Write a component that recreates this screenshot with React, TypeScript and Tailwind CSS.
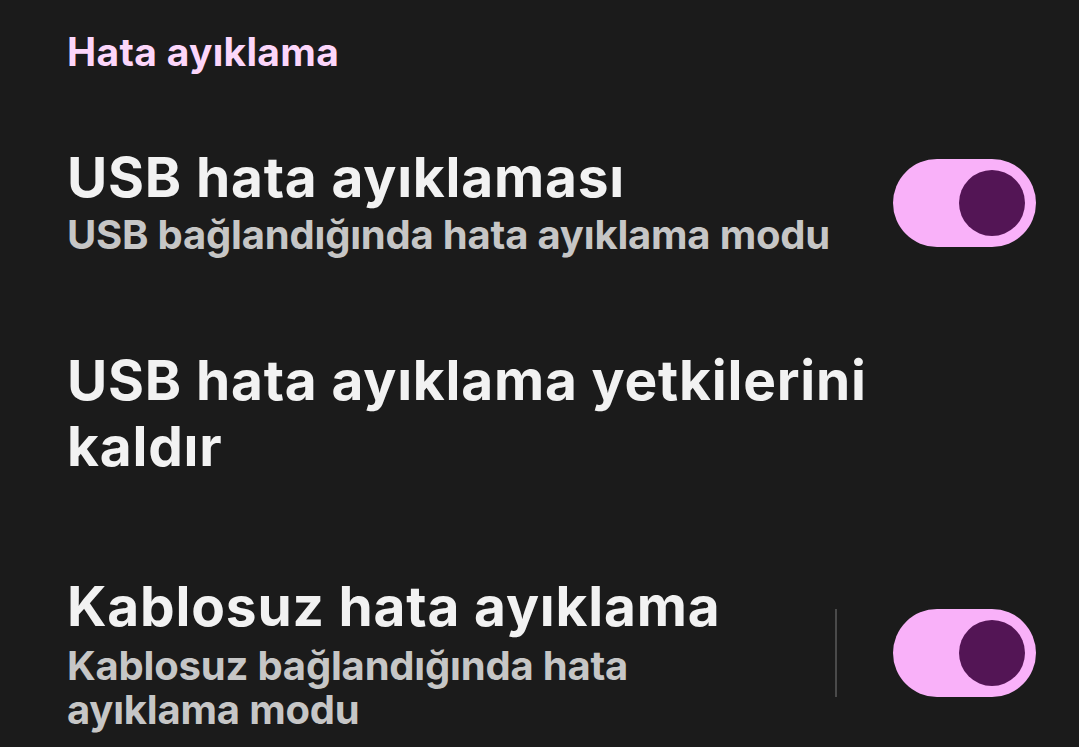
import React, { useState } from 'react';

type ToggleProps = { on: boolean; onChange: () => void };

function Toggle({ on, onChange }: ToggleProps) {
  return (
    <button
      onClick={onChange}
      className={`flex h-[88px] w-[143px] shrink-0 items-center rounded-full px-[11px] ${
        on ? 'justify-end bg-[#f9b1f9]' : 'justify-start bg-[#4a454e]'
      }`}
    >
      <span className={`block h-[66px] w-[66px] rounded-full ${on ? 'bg-[#531555]' : 'bg-[#958e98]'}`} />
    </button>
  );
}

export default function App() {
  const [usb, setUsb] = useState(true);
  const [wireless, setWireless] = useState(true);

  return (
    <div
      className="min-h-screen w-full bg-[#1b1b1b] pl-[67px] pr-[43px] pt-[29px]"
      style={{ fontFamily: 'Inter, "Noto Sans", sans-serif' }}
    >
      <h2 className="text-[39px] font-bold leading-[46px] tracking-[0.3px] text-[#fcd6fa]">Hata ayıklama</h2>

      <div className="flex items-center pt-[69px]">
        <div className="min-w-0 flex-1">
          <div className="text-[55px] font-bold leading-[66px] tracking-[0.8px] text-[#f2f2f2]">
            USB hata ayıklaması
          </div>
          <div className="mt-[3px] text-[40px] font-bold leading-[44px] tracking-[-0.2px] text-[#c6c6c6]">
            USB bağlandığında hata ayıklama modu
          </div>
        </div>
        <div className="ml-6 mt-[4px]">
          <Toggle on={usb} onChange={() => setUsb(!usb)} />
        </div>
      </div>

      <div className="pt-[90px]">
        <div className="max-w-[860px] text-[55px] font-bold leading-[66px] tracking-[0.8px] text-[#f2f2f2]">
          USB hata ayıklama yetkilerini kaldır
        </div>
      </div>

      <div className="flex items-center pt-[94px]">
        <div className="min-w-0 flex-1 pr-10">
          <div className="text-[55px] font-bold leading-[66px] tracking-[0.8px] text-[#f2f2f2]">
            Kablosuz hata ayıklama
          </div>
          <div className="mt-[5px] text-[40px] font-bold leading-[44px] tracking-[-0.2px] text-[#c6c6c6]">
            Kablosuz bağlandığında hata ayıklama modu
          </div>
        </div>
        <div className="h-[88px] w-[2px] bg-[#4a4a4a]" />
        <div className="ml-[56px]">
          <Toggle on={wireless} onChange={() => setWireless(!wireless)} />
        </div>
      </div>
    </div>
  );
}
